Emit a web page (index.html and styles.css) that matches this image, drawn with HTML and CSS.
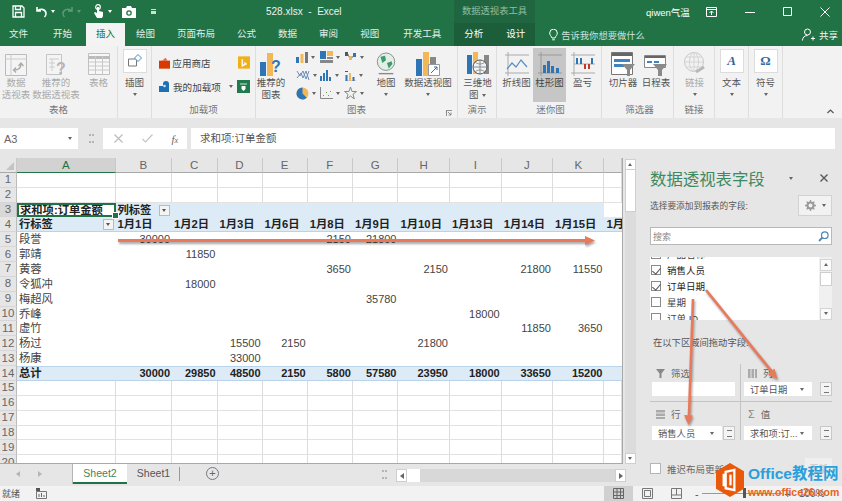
FILE: index.html
```html
<!DOCTYPE html>
<html lang="zh-CN">
<head>
  <meta charset="UTF-8">
  <title>528.xlsx - Excel</title>
  <link rel="stylesheet" href="styles.css">
</head>
<body>
  <div class="app">

    <!-- title bar -->
    <header class="titlebar">
      <div class="qat">
        <svg class="qat-save" width="13" height="13" viewBox="0 0 13 13"><path d="M1 1h9l2 2v9H1z M3.500 1v3.500h5V1 M3.500 12V7.500h6V12" fill="none" stroke="#fff" stroke-width="1.300"/></svg>
        <svg class="qat-undo" width="13" height="12" viewBox="0 0 13 12"><path d="M2 1v4h4 M2.500 5C4.500 2.500 10 2.500 11 7c.3 1.500-.5 3-1.500 4" fill="none" stroke="#fff" stroke-width="1.600"/></svg>
        <span class="qat-caret"></span>
        <svg class="qat-redo" width="13" height="12" viewBox="0 0 13 12"><path d="M11 1v4H7 M10.500 5C8.500 2.500 3 2.500 2 7c-.3 1.500.5 3 1.500 4" fill="none" stroke="#5d9c7c" stroke-width="1.500"/></svg>
        <span class="qat-caret qat-caret-off"></span>
        <svg class="qat-touch" width="12" height="15" viewBox="0 0 12 15"><circle cx="5" cy="3" r="2.300" fill="none" stroke="#fff" stroke-width="1.200"/><path d="M4 3h2v4l4 1v4l-1 2H4L1 9l1-1 2 1z" fill="#fff"/></svg>
        <span class="qat-caret"></span>
        <svg class="qat-camera" width="14" height="12" viewBox="0 0 14 12"><path d="M0 2h4l1-2h4l1 2h4v10H0z" fill="#fff"/><circle cx="7" cy="7" r="2.800" fill="#217346"/><circle cx="7" cy="7" r="1.500" fill="#fff"/></svg>
        <span class="qat-more"></span>
      </div>
      <div class="doc-title">528.xlsx&nbsp; - &nbsp;Excel</div>
      <div class="ctx-title">数据透视表工具</div>
      <div class="user">qiwen气温</div>
      <div class="win-btns">
        <svg width="11" height="10" viewBox="0 0 11 10"><path d="M.5.500h10v9H.5z M.5 2.500h10 M5.500 8V4 M3.500 6l2-2 2 2" fill="none" stroke="#fff"/></svg>
        <svg width="10" height="10" viewBox="0 0 10 10"><path d="M0 5.500h10" stroke="#fff"/></svg>
        <svg width="9" height="9" viewBox="0 0 9 9"><path d="M.5.500h8v8h-8z" fill="none" stroke="#fff"/></svg>
        <svg width="10" height="10" viewBox="0 0 10 10"><path d="M.5.500l9 9 M9.500.500l-9 9" stroke="#fff"/></svg>
      </div>
    </header>

    <!-- ribbon tabs -->
    <nav class="tabs">
      <a class="tab tab-file">文件</a>
      <a class="tab tab-home">开始</a>
      <a class="tab tab-insert">插入</a>
      <a class="tab">绘图</a>
      <a class="tab">页面布局</a>
      <a class="tab">公式</a>
      <a class="tab">数据</a>
      <a class="tab">审阅</a>
      <a class="tab">视图</a>
      <a class="tab tab-dev">开发工具</a>
      <a class="tab tab-ctx tab-analyze">分析</a>
      <a class="tab tab-ctx tab-design">设计</a>
      <div class="tell-me">
        <svg width="9" height="12" viewBox="0 0 9 12"><path d="M3 9C2.500 7 .7 6.500.7 4a3.800 3.800 0 0 1 7.600 0C8.300 6.500 6.500 7 6 9z M3.200 10.800h2.600" fill="none" stroke="#fff"/></svg>
        <span>告诉我你想要做什么</span>
      </div>
      <div class="share">
        <svg width="13" height="13" viewBox="0 0 13 13"><circle cx="5.500" cy="4" r="3" fill="none" stroke="#fff"/><path d="M.5 12.500c0-3 2-5 5-5 M9 10.500h4 M11 8.500v4" fill="none" stroke="#fff"/></svg>
        <span>共享</span>
      </div>
    </nav>

    <!-- ribbon -->
    <section class="ribbon">
      <div class="group g-table">
        <div class="group-items">
          <div class="big off w32">
            <svg width="24" height="24" viewBox="0 0 24 24"><path d="M1.500 2.500h21v21h-21z" fill="#f4f4f4" stroke="#bbb"/><path d="M1.500 7h21 M7 2.500v21" stroke="#ccc"/><path d="M10 18c4 0 7-2 7-6 M14.500 14l2.500-3 2.500 3 M12 15.500l-2.500 2.500 2.500 2.500" fill="none" stroke="#aaa" stroke-width="1.300"/></svg>
            <span>数据<br>透视表</span>
          </div>
          <div class="big off w48">
            <svg width="24" height="24" viewBox="0 0 24 24"><path d="M2.500 2.500h15v20h-15z" fill="#f4f4f4" stroke="#c4c4c4"/><path d="M5 7h10 M5 11h6 M5 15h6 M8 7v12" stroke="#ccc"/><text x="12" y="22" class="icon-q icon-q-off">?</text></svg>
            <span>推荐的<br>数据透视表</span>
          </div>
          <div class="big off w37">
            <svg width="24" height="24" viewBox="0 0 24 24"><path d="M1.500 1.500h21v21h-21z" fill="#f7f7f7" stroke="#c0c0c0"/><path d="M1.500 5.500h21" stroke="#bbb" stroke-width="3"/><path d="M1.500 10h21 M1.500 14h21 M1.500 18h21 M8.500 4v18 M15.500 4v18" stroke="#c8c8c8"/></svg>
            <span>表格</span>
          </div>
        </div>
        <div class="group-label">表格</div>
      </div>

      <div class="group g-illus">
        <div class="group-items">
          <div class="big boxed">
            <div class="ic-box"><svg width="16" height="16" viewBox="0 0 16 16"><path d="M1.500 6h8v7h-8z" fill="none" stroke="#777"/><path d="M11 1.500l3.500 3.500-3.500 3.500L7.500 5z" fill="#fff" stroke="#4a8ac4"/></svg></div>
            <span>插图</span>
            <i class="caret"></i>
          </div>
        </div>
        <div class="group-label"></div>
      </div>

      <div class="group g-addins">
        <div class="group-items addin-rows">
          <div class="addin-row">
            <svg width="12" height="12" viewBox="0 0 12 12"><path d="M0 3.500h12v8.500H0z" fill="#d83b01"/><path d="M3 3.500L7 .5l2 3" fill="#e8664a"/></svg>
            <span>应用商店</span>
            <svg class="addin-end" width="13" height="13" viewBox="0 0 13 13"><path d="M0 0h13v13H0z" fill="#efb116"/><path d="M4.500 3v7l4-2-2-1.500" fill="none" stroke="#fff" stroke-width="1.400"/></svg>
          </div>
          <div class="addin-row">
            <svg width="12" height="12" viewBox="0 0 12 12"><path d="M0 5h4V3a3 3 0 0 1 6 0v8H0z" fill="#1f6fb5"/><circle cx="5.500" cy="5" r="1.300" fill="#cfe3f5"/></svg>
            <span>我的加载项</span>
            <i class="caret caret-row"></i>
            <svg class="addin-end-b" width="13" height="13" viewBox="0 0 13 13"><path d="M0 0h13v13H0z" fill="#1f7a4d"/><path d="M3 4h7" stroke="#cfe8da"/><path d="M4.500 6h4v3l-2 2-2-2z" fill="#fff"/></svg>
          </div>
        </div>
        <div class="group-label">加载项</div>
      </div>

      <div class="group g-chart">
        <div class="group-items">
          <div class="big w30">
            <svg width="24" height="24" viewBox="0 0 24 24"><path d="M1 10h6v14H1z" fill="#2e75b6"/><path d="M8 1h6v23H8z" fill="#f2b858"/><text x="12" y="20" class="icon-q">?</text></svg>
            <span>推荐的<br>图表</span>
          </div>
          <div class="mini-charts">
            <div class="mini"><svg width="12" height="11" viewBox="0 0 12 11"><path d="M0 5h3v6H0z" fill="#2e75b6"/><path d="M4.500 2h3v9h-3z" fill="#f2b858"/><path d="M9 0h3v11H9z" fill="#777"/></svg><i class="caret"></i></div>
            <div class="mini"><svg width="14" height="12" viewBox="0 0 14 12"><path d="M1 2l3 5 3-5 3 8 3-8 M1 9l4-5 2 5 3-7 3 9" fill="none" stroke="#6a8fb8"/></svg><i class="caret"></i></div>
            <div class="mini"><svg width="13" height="13" viewBox="0 0 13 13"><circle cx="6.500" cy="6.500" r="6" fill="#f2b858"/><path d="M6.500 6.500V.5a6 6 0 1 0 4.200 10.300z" fill="#2e75b6"/></svg><i class="caret"></i></div>
            <div class="mini"><svg width="13" height="12" viewBox="0 0 13 12"><path d="M0 0h6v8H0z" fill="#2e75b6"/><path d="M7 0h6v5H7z" fill="#f2b858"/><path d="M0 9h13v3H0zM7 6h6v2H7z" fill="#888"/></svg><i class="caret"></i></div>
            <div class="mini"><svg width="12" height="11" viewBox="0 0 12 11"><path d="M0 6h2v5H0zM3 3h2v8H3zM6 0h2v11H6zM9 7h2v4H9z" fill="#2e75b6"/></svg><i class="caret"></i></div>
            <div class="mini"><svg width="13" height="12" viewBox="0 0 13 12"><path d="M.5 0v11.500H13" fill="none" stroke="#888"/><path d="M3 8h1v1H3zM6 5h1v1H6zM8 8h1v1H8zM10 4h1v1h-1z" fill="#6aa84f"/></svg><i class="caret"></i></div>
            <div class="mini"><svg width="13" height="12" viewBox="0 0 13 12"><path d="M1 1h3v4H1z" fill="#555"/><path d="M5 5h3v4H5z" fill="#f2b858"/><path d="M9 2h3v4H9z" fill="#2e75b6"/><path d="M4 3l1 3 M8 7l1-2" stroke="#888"/></svg><i class="caret"></i></div>
            <div class="mini"><svg width="12" height="11" viewBox="0 0 12 11"><path d="M1 11h11" stroke="#aaa"/><path d="M1.500 5h2v6h-2z" fill="#2e75b6"/><path d="M5 3h2v8H5z" fill="#f2b858"/><path d="M8.500 7h2v4h-2z" fill="#2e75b6"/><path d="M1 1.500h3" stroke="#555"/></svg><i class="caret"></i></div>
            <div class="mini"><svg width="13" height="12" viewBox="0 0 13 12"><path d="M6.500 0l1.500 4.500h4.500L9 7.300 10.300 12 6.500 9 2.700 12 4 7.300.5 4.500H5z" fill="none" stroke="#888"/></svg><i class="caret"></i></div>
          </div>
          <div class="big w36">
            <svg width="22" height="24" viewBox="0 0 24 26"><circle cx="12" cy="10.500" r="9.500" fill="#e2eee6" stroke="#7a8f84"/><path d="M6 5l5-1 1 5-4 3zM13 12l5-2 1 3-4 5z" fill="#3f9b6d"/><path d="M4 23.500h16" stroke="#888" stroke-width="1.500"/></svg>
            <span>地图</span>
            <i class="caret"></i>
          </div>
          <div class="big w48">
            <svg width="24" height="24" viewBox="0 0 24 24"><path d="M0 7h6v17H0z" fill="#2e75b6"/><path d="M7 0h6v24H7z" fill="#f2b858"/><path d="M14 5h6v9h-6z" fill="#888"/><path d="M12.500 12.500h11v11h-11z" fill="#fff" stroke="#999"/><path d="M15 21l6-6 M18 15h3v3" fill="none" stroke="#2e75b6"/></svg>
            <span>数据透视图</span>
            <i class="caret"></i>
          </div>
        </div>
        <div class="group-label">图表</div>
        <svg class="launcher" width="6" height="6" viewBox="0 0 6 6"><path d="M.5 3V.5H6 M.5.500v5.500 M2 2l3 3 M5 2.500V5H2.500" fill="none" stroke="#777" stroke-width=".8"/></svg>
      </div>

      <div class="group g-tour">
        <div class="group-items">
          <div class="big w39">
            <svg width="24" height="24" viewBox="0 0 24 24"><path d="M1 3h5v19H1z" fill="#2e75b6"/><path d="M7 0h5v22H7z" fill="#f2b858"/><path d="M18 3h5v19h-5z" fill="#888"/><circle cx="14" cy="15" r="7" fill="#eef3f7" stroke="#555"/><path d="M7 15h14 M14 8v14 M9.500 10.500c3 2 6 2 9 0 M9.500 19.500c3-2 6-2 9 0" fill="none" stroke="#777" stroke-width=".8"/></svg>
            <span>三维地<br>图 <i class="caret caret-inline"></i></span>
          </div>
        </div>
        <div class="group-label">演示</div>
      </div>

      <div class="group g-spark">
        <div class="group-items">
          <div class="big w33">
            <svg width="24" height="24" viewBox="0 0 24 24"><path d="M0 3h24 M0 21h24 M3 0v24" stroke="#aaa" fill="none"/><path d="M2 17l5-6 4 4 5-7 6 7" fill="none" stroke="#5b8fc0" stroke-width="1.200"/></svg>
            <span>折线图</span>
          </div>
          <div class="big w33 spark-on">
            <svg width="24" height="24" viewBox="0 0 24 24"><path d="M0 3h24 M0 21h24 M3 0v24" stroke="#999" fill="none"/><path d="M5 13h3v8H5zM9 9h3v12H9zM13 14h3v7h-3zM18 16h3v5h-3z" fill="#2e75b6"/></svg>
            <span>柱形图</span>
          </div>
          <div class="big w33">
            <svg width="24" height="24" viewBox="0 0 24 24"><path d="M0 3h24 M0 21h24 M3 0v24 M3 12h21" stroke="#aaa" fill="none"/><path d="M5 6h2v6H5zM9 6h2v6H9zM20 6h2v6h-2z" fill="#2e75b6"/><path d="M13 12h2v5h-2zM17 12h2v5h-2z" fill="#c0392b"/></svg>
            <span>盈亏</span>
          </div>
        </div>
        <div class="group-label">迷你图</div>
      </div>

      <div class="group g-filter">
        <div class="group-items">
          <div class="big w34">
            <svg width="24" height="24" viewBox="0 0 24 24"><path d="M.5.500h21v22H.500z" fill="#fff" stroke="#777"/><path d="M1 1h20v3H1z" fill="#666"/><path d="M3 7h16v3H3zM3 12h10v3H3z" fill="#3f83c0"/><path d="M11 12h13l-5 6v6h-3v-6z" fill="#8a8a8a"/></svg>
            <span>切片器</span>
          </div>
          <div class="big w32">
            <svg width="24" height="24" viewBox="0 0 24 24"><path d="M.5 3.500h21v12H.500z" fill="#fff" stroke="#888"/><path d="M1 4h20v2H1z" fill="#666"/><path d="M3 9h5v2H3zM10 9h5v2h-5z" fill="#3f83c0"/><path d="M9 12h14l-5 6v6h-4v-6z" fill="#8a8a8a"/></svg>
            <span>日程表</span>
          </div>
        </div>
        <div class="group-label">筛选器</div>
      </div>

      <div class="group g-link">
        <div class="group-items">
          <div class="big off w41">
            <svg width="24" height="24" viewBox="0 0 24 24"><circle cx="11" cy="10" r="9.500" fill="none" stroke="#c8c8c8"/><path d="M1.500 10h19 M11 .5v19 M3.500 5h15 M3.500 15h15" stroke="#d4d4d4"/><ellipse cx="11" cy="10" rx="4.500" ry="9.500" fill="none" stroke="#d4d4d4"/><path d="M13 20l8-5" stroke="#b8b8b8" stroke-width="3"/></svg>
            <span>链接</span>
            <i class="caret"></i>
          </div>
        </div>
        <div class="group-label">链接</div>
      </div>

      <div class="group g-text">
        <div class="group-items">
          <div class="big boxed">
            <div class="ic-box"><em class="letter-a">A</em></div>
            <span>文本</span>
            <i class="caret"></i>
          </div>
        </div>
        <div class="group-label"></div>
      </div>

      <div class="group g-symbol">
        <div class="group-items">
          <div class="big boxed">
            <div class="ic-box"><em class="letter-o">Ω</em></div>
            <span>符号</span>
            <i class="caret"></i>
          </div>
        </div>
        <div class="group-label"></div>
      </div>

      <svg class="collapse" width="7" height="5" viewBox="0 0 7 5"><path d="M.5 4l3-3 3 3" fill="none" stroke="#555" stroke-width="1.200"/></svg>
    </section>

    <!-- formula bar -->
    <div class="formula">
      <div class="name-box"><span>A3</span><i class="caret"></i></div>
      <div class="f-dots"></div>
      <div class="f-btns">
        <svg width="9" height="9" viewBox="0 0 9 9"><path d="M.5.500l8 8 M8.500.500l-8 8" stroke="#bcbcbc" stroke-width="1.200"/></svg>
        <svg width="11" height="9" viewBox="0 0 11 9"><path d="M.5 5l3 3 7-7.500" fill="none" stroke="#c4c4c4" stroke-width="1.200"/></svg>
        <em>f<small>x</small></em>
      </div>
      <div class="f-input">求和项:订单金额</div>
    </div>

    <div class="workspace">
      <main class="book">
        <div class="sheet-row">
          <div class="grid-wrap">
            <table class="sheet">
              <colgroup>
                <col class="c-head"><col class="c-a"><col class="c-b"><col class="c-c"><col class="c-d"><col class="c-e"><col class="c-f"><col class="c-g"><col class="c-h"><col class="c-i"><col class="c-j"><col class="c-k"><col class="c-l">
              </colgroup>
              <thead>
                <tr><th class="corner"></th><th class="col-on">A</th><th>B</th><th>C</th><th>D</th><th>E</th><th>F</th><th>G</th><th>H</th><th>I</th><th>J</th><th>K</th><th></th></tr>
              </thead>
              <tbody>
                <tr class="lined"><th>1</th><td></td><td></td><td></td><td></td><td></td><td></td><td></td><td></td><td></td><td></td><td></td><td></td></tr>
                <tr class="lined"><th>2</th><td></td><td></td><td></td><td></td><td></td><td></td><td></td><td></td><td></td><td></td><td></td><td></td></tr>
                <tr class="band"><th class="row-on">3</th><td class="selected">求和项:订单金额</td><td class="lbl" colspan="2">列标签<i class="filter-btn filter-col"></i></td><td></td><td></td><td></td><td></td><td></td><td></td><td></td><td></td></tr>
                <tr class="band under"><th>4</th><td class="lbl">行标签<i class="filter-btn"></i></td><td class="lbl">1月1日</td><td class="lbl">1月2日</td><td class="lbl">1月3日</td><td class="lbl">1月6日</td><td class="lbl">1月8日</td><td class="lbl">1月9日</td><td class="lbl">1月10日</td><td class="lbl">1月13日</td><td class="lbl">1月14日</td><td class="lbl">1月15日</td><td class="lbl">1月</td></tr>
                <tr><th>5</th><td class="lbl">段誉</td><td>30000</td><td></td><td></td><td></td><td>2150</td><td>21800</td><td></td><td></td><td></td><td></td><td></td></tr>
                <tr><th>6</th><td class="lbl">郭靖</td><td></td><td>11850</td><td></td><td></td><td></td><td></td><td></td><td></td><td></td><td></td><td></td></tr>
                <tr><th>7</th><td class="lbl">黄蓉</td><td></td><td></td><td></td><td></td><td>3650</td><td></td><td>2150</td><td></td><td>21800</td><td>11550</td><td></td></tr>
                <tr><th>8</th><td class="lbl">令狐冲</td><td></td><td>18000</td><td></td><td></td><td></td><td></td><td></td><td></td><td></td><td></td><td></td></tr>
                <tr><th>9</th><td class="lbl">梅超风</td><td></td><td></td><td></td><td></td><td></td><td>35780</td><td></td><td></td><td></td><td></td><td></td></tr>
                <tr><th>10</th><td class="lbl">乔峰</td><td></td><td></td><td></td><td></td><td></td><td></td><td></td><td>18000</td><td></td><td></td><td></td></tr>
                <tr><th>11</th><td class="lbl">虚竹</td><td></td><td></td><td></td><td></td><td></td><td></td><td></td><td></td><td>11850</td><td>3650</td><td></td></tr>
                <tr><th>12</th><td class="lbl">杨过</td><td></td><td></td><td>15500</td><td>2150</td><td></td><td></td><td>21800</td><td></td><td></td><td></td><td></td></tr>
                <tr><th>13</th><td class="lbl">杨康</td><td></td><td></td><td>33000</td><td></td><td></td><td></td><td></td><td></td><td></td><td></td><td></td></tr>
                <tr class="band total"><th>14</th><td class="lbl">总计</td><td>30000</td><td>29850</td><td>48500</td><td>2150</td><td>5800</td><td>57580</td><td>23950</td><td>18000</td><td>33650</td><td>15200</td><td></td></tr>
                <tr class="lined"><th>15</th><td></td><td></td><td></td><td></td><td></td><td></td><td></td><td></td><td></td><td></td><td></td><td></td></tr>
                <tr class="lined"><th>16</th><td></td><td></td><td></td><td></td><td></td><td></td><td></td><td></td><td></td><td></td><td></td><td></td></tr>
                <tr class="lined"><th>17</th><td></td><td></td><td></td><td></td><td></td><td></td><td></td><td></td><td></td><td></td><td></td><td></td></tr>
                <tr class="lined"><th>18</th><td></td><td></td><td></td><td></td><td></td><td></td><td></td><td></td><td></td><td></td><td></td><td></td></tr>
                <tr class="lined"><th>19</th><td></td><td></td><td></td><td></td><td></td><td></td><td></td><td></td><td></td><td></td><td></td><td></td></tr>
                <tr class="lined"><th>20</th><td></td><td></td><td></td><td></td><td></td><td></td><td></td><td></td><td></td><td></td><td></td><td></td></tr>
              </tbody>
            </table>
          </div>
          <div class="vscroll">
            <div class="sb-btn sb-up"></div>
            <div class="sb-thumb"></div>
            <div class="sb-track"></div>
            <div class="sb-btn sb-down"></div>
          </div>
        </div>

        <div class="sheet-tabs">
          <div class="tab-nav"><i class="nav-l"></i><i class="nav-r"></i></div>
          <div class="stab stab-on">Sheet2</div>
          <div class="stab">Sheet1</div>
          <div class="add-sheet">+</div>
          <div class="tab-split"></div>
          <div class="hscroll">
            <div class="hb-btn"><i class="nav-l"></i></div>
            <div class="hb-thumb"></div>
            <div class="hb-track"></div>
            <div class="hb-btn"><i class="nav-r"></i></div>
          </div>
        </div>
      </main>

      <!-- pivot field pane -->
      <aside class="pane">
        <div class="pane-head">
          <h2>数据透视表字段</h2>
          <i class="caret pane-caret"></i>
          <svg class="pane-x" width="8" height="8" viewBox="0 0 8 8"><path d="M.5.500l7 7 M7.500.500l-7 7" stroke="#555" stroke-width="1.300"/></svg>
        </div>
        <div class="pane-sub">
          <span>选择要添加到报表的字段:</span>
          <div class="gear-btn">
            <svg width="11" height="11" viewBox="0 0 11 11"><circle cx="5.500" cy="5.500" r="3" fill="none" stroke="#999" stroke-width="2"/><path d="M5.500 0v2 M5.500 9v2 M0 5.500h2 M9 5.500h2 M1.600 1.600L3 3 M8 8l1.400 1.400 M9.400 1.600L8 3 M3 8L1.600 9.400" stroke="#999" stroke-width="1.300"/></svg>
            <i class="caret"></i>
          </div>
        </div>
        <div class="search">
          <span>搜索</span>
          <svg width="11" height="11" viewBox="0 0 11 11"><circle cx="6.800" cy="4.200" r="3.300" fill="none" stroke="#4d86b8" stroke-width="1.200"/><path d="M4.300 6.700L1 10" stroke="#4d86b8" stroke-width="1.800"/></svg>
        </div>
        <div class="field-list">
          <div class="fields">
            <div class="field field-top"><i class="chk"></i><span>产品名称</span></div>
            <div class="field"><i class="chk on"></i><b>销售人员</b></div>
            <div class="field"><i class="chk on"></i><b>订单日期</b></div>
            <div class="field"><i class="chk"></i><span>星期</span></div>
            <div class="field"><i class="chk"></i><span>订单 ID</span></div>
          </div>
          <div class="field-scroll">
            <div class="fs-btn fs-up"></div>
            <div class="fs-thumb"></div>
            <div class="fs-track"></div>
            <div class="fs-btn fs-down"></div>
          </div>
        </div>
        <p class="pane-hint">在以下区域间拖动字段:</p>
        <div class="areas">
          <div class="area area-tl">
            <div class="area-title">
              <svg width="9" height="9" viewBox="0 0 9 9"><path d="M0 0h9L5.500 4.500V9h-2V4.500z" fill="#888"/></svg><span>筛选</span>
            </div>
            <div class="area-empty"></div>
          </div>
          <div class="area area-tr">
            <div class="area-title">
              <svg width="9" height="9" viewBox="0 0 9 9"><path d="M0 0h2.500v9H0zM3.500 0H6v9H3.500zM7 0h2v9H7z" fill="#aaa"/></svg><span>列</span>
            </div>
            <div class="area-pick"><div class="pick"><span>订单日期</span><i class="caret"></i></div><div class="spin"><i></i><i></i></div></div>
          </div>
          <div class="area area-bl">
            <div class="area-title">
              <svg width="9" height="9" viewBox="0 0 9 9"><path d="M0 0h9v2.500H0zM0 3.500h9V6H0zM0 7h9v2H0z" fill="#aaa"/></svg><span>行</span>
            </div>
            <div class="area-pick"><div class="pick pick-sm"><span>销售人员</span><i class="caret"></i></div><div class="spin"><i></i><i></i></div></div>
          </div>
          <div class="area area-br">
            <div class="area-title">
              <em class="sigma">Σ</em><span>值</span>
            </div>
            <div class="area-pick"><div class="pick"><span>求和项:订...</span><i class="caret"></i></div><div class="spin"><i></i><i></i></div></div>
          </div>
        </div>
        <div class="pane-foot">
          <i class="chk"></i>
          <span>推迟布局更新</span>
          <button class="update">更新</button>
        </div>
      </aside>
    </div>

    <!-- status bar -->
    <footer class="status">
      <span class="ready">就绪</span>
      <svg class="macro" width="11" height="11" viewBox="0 0 11 11"><path d="M.5 3.500h10v7H.5z" fill="none" stroke="#777"/><path d="M0 0h4v3H0z" fill="#555"/><path d="M3 9V6 M5.500 9V5 M8 9V7" stroke="#666"/></svg>
      <div class="view view-on">
        <svg width="11" height="11" viewBox="0 0 11 11"><path d="M.5.500h10v10H.500z M.5 4h10 M.5 7.500h10 M4 .500v10 M7.500.500v10" fill="none" stroke="#666"/></svg>
      </div>
      <div class="view">
        <svg width="11" height="11" viewBox="0 0 11 11"><path d="M.5.500h10v10H.500z M2.500 2.500h6v6h-6z" fill="none" stroke="#777"/></svg>
      </div>
      <div class="view">
        <svg width="11" height="11" viewBox="0 0 11 11"><path d="M.5.500h10v10H.500z M.5 7h10 M5.500.500V7" fill="none" stroke="#777"/></svg>
      </div>
      <div class="zoom-bar"><span>-</span><div class="slider"><i></i></div><span>+</span></div>
      <span class="zoom-val">100%</span>
    </footer>

    <!-- arrows drawn over the screenshot -->
    <svg class="arrows" width="842" height="501" viewBox="0 0 842 501">
      <path d="M118 240.500H586" stroke="#e9795a" stroke-width="2.800" fill="none"/>
      <path d="M595 240.500l-10-4.500v9z" fill="#e9795a"/>
      <path d="M706 290L773 373" stroke="#e9795a" stroke-width="2.600" fill="none"/>
      <path d="M777.500 379l-9.500-4.500 6.500-6z" fill="#e9795a"/>
      <path d="M693 299L689 416" stroke="#e9795a" stroke-width="2.600" fill="none"/>
      <path d="M688.500 425l-4.500-10 9 .5z" fill="#e9795a"/>
    </svg>

    <!-- site watermark -->
    <div class="mark">
      <svg width="28" height="34" viewBox="0 0 29 35"><path d="M14.500 0L29 8.500v18L14.500 35 0 26.500v-18z" fill="#e8590c"/><path d="M10 9l9-2v21l-9-2z M8 11v13" fill="none" stroke="#fff" stroke-width="2.400"/><path d="M15 12v11" stroke="#fff" stroke-width="2.400"/></svg>
      <div class="mark-text">
        <strong>Office教程网</strong>
        <span>www.office26.com</span>
      </div>
    </div>
  </div>
</body>
</html>
```

FILE: styles.css
```css
*{margin: 0; padding: 0; box-sizing: border-box;}
html, body{width: 842px; height: 501px; overflow: hidden;}
body{font-family: "Liberation Sans", "Noto Sans CJK SC", sans-serif; background-color: #e6e6e6; color: #444;}
i, em{font-style: normal;}

.app{width: 842px; height: 501px; position: relative; overflow: hidden; display: flex; flex-direction: column;}

/* small dropdown triangle used all over */
.caret{display: block; width: 0; height: 0; border-left: 2.500px solid transparent; border-right: 2.500px solid transparent; border-top: 3px solid #666;}

/* title bar */
.titlebar{height: 23px; background-color: #217346; color: #fff; display: flex; align-items: center; font-size: 9.500px;}
.qat{width: 266px; display: flex; align-items: center; padding-left: 12px;}
.qat-undo{margin-left: 10px;}
.qat-caret{width: 0; height: 0; margin-left: 3px; border-left: 2px solid transparent; border-right: 2px solid transparent; border-top: 3px solid #fff;}
.qat-caret-off{border-top-color: #5d9c7c;}
.qat-redo{margin-left: 6px;}
.qat-touch{margin-left: 12px;}
.qat-camera{margin-left: 10px;}
.qat-more{width: 5px; height: 5px; margin-left: 15px; border-top: 1px solid #cfe0d6; border-bottom: 3px solid #cfe0d6;}
.doc-title{width: 188px; font-size: 10px; color: #e9f2ed;}
.ctx-title{width: 81px; height: 23px; line-height: 23px; text-align: center; background-color: #1f6640; color: #8fbfa4; font-size: 9.300px;}
.user{width: 156px; padding-left: 111px; white-space: nowrap; font-size: 9.500px;}
.win-btns{display: flex; align-items: center; margin-left: 15px; gap: 28px;}

/* tabs */
.tabs{height: 23px; background-color: #217346; color: #fff; display: flex; align-items: stretch; font-size: 9.500px;}
.tab{padding: 0 11px; line-height: 22px; color: #e4efe9;}
.tab-file{padding: 0 11px 0 9px;}
.tab-home{padding: 0 14px;}
.tab-insert{padding: 0 10px; background-color: #f3f3f3; color: #217346;}
.tab-dev{padding: 0 13px;}
.tab-ctx{background-color: #1c5e3a; color: #fff;}
.tab-analyze{padding: 0 10px;}
.tab-design{padding: 0 10px 0 13px;}
.tell-me{display: flex; align-items: center; gap: 3px; padding-left: 14px; flex: 1; color: #cfe2d8; font-size: 9.300px;}
.share{display: flex; align-items: center; gap: 4px; padding-right: 4px; color: #f2f7f4;}

/* ribbon */
.ribbon{height: 72px; background-color: #f2f2f2; display: flex; position: relative; font-size: 9.500px; color: #555;}
.group{position: relative; display: flex; flex-direction: column; flex-shrink: 0; border-right: 1px solid #dedede;}
.group-items{flex: 1; display: flex;}
.group-label{height: 15px; line-height: 13px; text-align: center; color: #777;}
.g-table{width: 118px;}
.g-illus{width: 34px;}
.g-addins{width: 104px;}
.g-chart{width: 202px;}
.g-tour{width: 39px;}
.g-spark{width: 105px; padding-left: 3px;}
.g-filter{width: 72px; padding-left: 4px;}
.g-link{width: 41px;}
.g-text{width: 34px;}
.g-symbol{width: 34px;}

.big{display: flex; flex-direction: column; align-items: center; text-align: center; padding-top: 6px; line-height: 12px; flex-shrink: 0;}
.big svg{flex-shrink: 0;}
.big > span{margin-top: 1px; white-space: nowrap;}
.big > .caret{margin-top: 4px;}
.off{color: #aaa;}
.w30{width: 30px;}
.w32{width: 32px;}
.w33{width: 33px;}
.w34{width: 34px;}
.w36{width: 36px;}
.w37{width: 37px;}
.w39{width: 39px;}
.w41{width: 41px;}
.w48{width: 48px;}
.spark-on{background-color: #c6c6c6; height: 54px; margin-top: 2px; padding-top: 4px; color: #444;}
.icon-q{font: bold 16px "Liberation Sans", sans-serif; fill: #2e75b6;}
.icon-q-off{fill: #b5b5b5;}

.boxed{width: 100%; padding-top: 3px;}
.ic-box{width: 24px; height: 24px; background-color: #fff; border: 1px solid #dcdcdc; display: flex; align-items: center; justify-content: center;}
.boxed > span{margin-top: 4px;}
.letter-a{font: italic bold 13px "Liberation Serif", serif; color: #2e5f9e;}
.letter-o{font: bold 13px "Liberation Serif", serif; color: #2e6da4;}

.addin-rows{flex-direction: column; padding: 10px 5px 0 7px; gap: 11px;}
.addin-row{display: flex; align-items: center; height: 13px; color: #444; font-size: 9.600px;}
.addin-row > span{margin-left: 2px; white-space: nowrap;}
.addin-end{margin-left: 27px;}
.caret-row{margin-left: 8px;}
.addin-end-b{margin-left: 4px;}

.mini-charts{width: 72px; margin-left: 10px; padding-top: 2px; display: grid; grid-template-columns: repeat(3, 1fr); grid-auto-flow: column; grid-template-rows: repeat(3, 18px);}
.mini{display: flex; align-items: center; gap: 3px;}

.launcher{position: absolute; right: 5px; bottom: 2px;}
.caret-inline{display: inline-block; vertical-align: middle; margin-left: 1px;}
.collapse{position: absolute; right: 8px; bottom: 4px;}

/* formula bar */
.formula{height: 32px; padding: 10px 7px 0 0; display: flex; align-items: flex-start;}
.name-box{width: 78px; height: 21px; background-color: #fff; display: flex; align-items: center; justify-content: space-between; padding: 0 6px 0 4px; font-size: 11px; color: #666;}
.f-dots{width: 3px; height: 9px; margin: 6px 11px 0; border-top: 2px dotted #b5b5b5; border-bottom: 2px dotted #b5b5b5;}
.f-btns{width: 84px; height: 21px; background-color: #fff; display: flex; align-items: center; justify-content: space-between; padding: 0 9px 0 11px;}
.f-btns em{font: italic 11px "Liberation Serif", serif; color: #666;}
.f-btns small{font-size: 8px;}
.f-input{flex: 1; height: 21px; margin-left: 4px; background-color: #fff; padding-left: 9px; line-height: 20px; font-size: 10.500px; color: #555;}

/* main part */
.workspace{flex: 1; display: flex; min-height: 0;}
.book{width: 640px; padding-top: 8px; display: flex; flex-direction: column;}
.sheet-row{height: 306px; display: flex;}
.grid-wrap{width: 623px; height: 306px; overflow: hidden; border-right: 1px solid #a8a8a8; border-bottom: 1px solid #a8a8a8;}

.sheet{width: 622px; table-layout: fixed; border-collapse: separate; border-spacing: 0; background-color: #fff;}
.c-head{width: 17px;}
.c-a{width: 98.500px;}
.c-b{width: 56.500px;}
.c-c{width: 45.500px;}
.c-d{width: 45px;}
.c-e{width: 45.200px;}
.c-f{width: 45.300px;}
.c-g{width: 45.500px;}
.c-h{width: 51.500px;}
.c-i{width: 51.700px;}
.c-j{width: 51.300px;}
.c-k{width: 51.500px;}
.c-l{width: 17.500px;}

.sheet thead th{height: 14px; background-color: #e6e6e6; border-bottom: 1px solid #a8a8a8; border-right: 1px solid #c8c8c8; font-weight: normal; font-size: 11.500px; line-height: 12px; color: #666;}
.sheet thead th.col-on{background-color: #d2d2d2; border-bottom: 1px solid #217346; color: #217346;}
.sheet thead th.corner{position: relative;}
.sheet thead th.corner::after{content: ""; position: absolute; right: 2px; bottom: 2px; border-left: 8px solid transparent; border-bottom: 8px solid #c4c4c4;}
.sheet tr{height: 14.860px;}
.sheet tbody th{background-color: #e6e6e6; border-right: 1px solid #bbb; border-bottom: 1px solid #d6d6d6; font-weight: normal; font-size: 11.500px; line-height: 13px; color: #666; padding: 0; overflow: hidden; white-space: nowrap;}
.sheet tbody th.row-on{background-color: #d8d8d8;}
.sheet td{padding: 0 2px 0 1px; text-align: right; font-size: 11px; line-height: 13px; color: #444; white-space: nowrap; overflow: hidden;}
.sheet td.lbl{text-align: left; padding-left: 2px; font-size: 11.300px;}
.lined td{border-bottom: 1px solid #e2e2e2; border-right: 1px solid #dcdcdc;}
.band td{background-color: #ddebf7;}
.band td, .band td.lbl{font-weight: bold; color: #222;}
.under td{border-bottom: 1px solid #b8d3ea;}
.total td{border-top: 1px solid #b8d3ea; border-bottom: 1px solid #b8d3ea;}
.sheet td.selected{position: relative; text-align: left; padding-left: 3px; font-size: 11.300px; background-color: #fff; outline: 2px solid #217346; outline-offset: -2px; overflow: visible;}
.sheet td.selected::after{content: ""; position: absolute; right: -3px; bottom: -2px; width: 5px; height: 5px; background-color: #217346; border: 1px solid #fff;}

.filter-btn{float: right; width: 11px; height: 11px; margin-top: 1px; background-color: #f4f4f4; border: 1px solid #bbb; position: relative;}
.filter-btn::after{content: ""; position: absolute; left: 2px; top: 3px; border-left: 2.500px solid transparent; border-right: 2.500px solid transparent; border-top: 3px solid #555;}
.filter-col{float: none; display: inline-block; vertical-align: top; margin-left: 8px;}

.vscroll{width: 17px; height: 306px; padding: 1px 4px 0 2px; display: flex; flex-direction: column;}
.sb-btn{height: 11px; background-color: #fff; border: 1px solid #cfcfcf; position: relative;}
.sb-btn::after{content: ""; position: absolute; left: 2px; top: 3px; border-left: 2.500px solid transparent; border-right: 2.500px solid transparent;}
.sb-up::after{border-bottom: 3px solid #666;}
.sb-down::after{border-top: 3px solid #666;}
.sb-thumb{height: 42px; background-color: #fff; border: 1px solid #cfcfcf; border-top: 0;}
.sb-track{flex: 1; background-color: #dcdcdc;}

.sheet-tabs{height: 20px; display: flex; align-items: stretch; font-size: 10.500px;}
.tab-nav{width: 73px; display: flex; align-items: center; gap: 18px; padding-left: 16px; border-right: 1px solid #b5b5b5;}
.nav-l{display: block; width: 0; height: 0; border-top: 3px solid transparent; border-bottom: 3px solid transparent; border-right: 4px solid #b5b5b5;}
.nav-r{display: block; width: 0; height: 0; border-top: 3px solid transparent; border-bottom: 3px solid transparent; border-left: 4px solid #b5b5b5;}
.stab{width: 53px; text-align: center; line-height: 19px; color: #555; position: relative;}
.stab-on{width: 54px; background-color: #fff; color: #3f8660; border-bottom: 2px solid #217346;}
.stab:nth-child(3)::after{content: ""; position: absolute; right: 0; top: 3px; height: 14px; border-right: 1px solid #999;}
.add-sheet{width: 13px; height: 13px; margin: 3px 0 0 26px; border: 1px solid #777; border-radius: 50%; font-size: 11px; line-height: 10px; text-align: center; color: #666;}
.tab-split{width: 3px; height: 9px; margin: 6px 0 0 163px; border-top: 2px dotted #b5b5b5; border-bottom: 2px dotted #b5b5b5;}
.hscroll{width: 230px; height: 13px; margin: 5px 0 0 11px; background-color: #d8d8d8; display: flex;}
.hb-btn{width: 11px; background-color: #fff; border: 1px solid #cfcfcf; display: flex; align-items: center; justify-content: center;}
.hb-btn i{border-left-color: #666; border-right-color: #666;}
.hb-thumb{width: 13px; background-color: #fff;}
.hb-track{flex: 1;}

/* pane */
.pane{width: 202px; padding: 18px 10px 0; display: flex; flex-direction: column; font-size: 9px; color: #555;}
.pane-head{height: 20px; display: flex; align-items: center;}
.pane-head h2{font-size: 16.400px; font-weight: normal; color: #3c8a64; white-space: nowrap;}
.pane-caret{margin-left: 24px;}
.pane-x{margin-left: 27px;}
.pane-sub{height: 21px; margin-top: 7px; display: flex; align-items: center; justify-content: space-between; font-size: 8.700px;}
.gear-btn{width: 34px; height: 21px; background-color: #f2f2f2; border: 1px solid #d2d2d2; display: flex; align-items: center; justify-content: center; gap: 6px;}
.search{height: 18px; margin-top: 11px; background-color: #fff; border: 1px solid #b8b8b8; display: flex; align-items: center; justify-content: space-between; padding: 0 2px; color: #888;}
.field-list{height: 63px; margin-top: 12px; background-color: #fff; display: flex; overflow: hidden;}
.fields{flex: 1; overflow: hidden;}
.field{height: 16px; display: flex; align-items: center; gap: 6px; padding-left: 1px; font-size: 9.500px; color: #444;}
.field b{font-weight: normal; color: #222;}
.field-top{margin-top: -11px;}
.chk{display: block; width: 10px; height: 10px; border: 1px solid #8a8a8a; background-color: #fff; flex-shrink: 0; position: relative;}
.chk.on::after{content: ""; position: absolute; left: 2px; top: 0; width: 4px; height: 7px; border-right: 1px solid #555; border-bottom: 1px solid #555; transform: rotate(40deg);}
.field-scroll{width: 13px; padding-left: 1px; background-color: #f0f0f0; display: flex; flex-direction: column;}
.fs-btn{height: 12px; background-color: #fbfbfb; border: 1px solid #d4d4d4; position: relative; margin-top: 2px;}
.fs-btn::after{content: ""; position: absolute; left: 3px; top: 3px; border-left: 2.500px solid transparent; border-right: 2.500px solid transparent;}
.fs-up::after{border-bottom: 3px solid #666;}
.fs-down::after{border-top: 3px solid #666;}
.fs-thumb{height: 14px; margin-top: 1px; background-color: #fff; border: 1px solid #cfcfcf;}
.fs-track{flex: 1;}
.pane-hint{height: 12px; margin-top: 17px; padding-left: 3px; line-height: 12px; font-size: 9.300px; color: #555;}
.areas{margin-top: 15px; width: 182px; height: 76px; display: grid; grid-template-columns: 91px 91px; grid-template-rows: 38px 38px;}
.area{padding-left: 2px; padding-right: 0;}
.area-tl, .area-bl{border-right: 1px solid #c4c4c4; padding-right: 5px;}
.area-tr, .area-br{padding-left: 3px;}
.area-tl, .area-tr{border-bottom: 1px solid #c4c4c4;}
.area-title{height: 18px; display: flex; align-items: center; gap: 6px; padding-left: 4px; font-size: 9.500px; color: #666;}
.area-bl .area-title, .area-br .area-title{height: 24px;}
.area-empty{height: 14px; background-color: #fff;}
.area-pick{display: flex; align-items: flex-start; justify-content: space-between;}
.pick{width: 68px; height: 14px; background-color: #fff; display: flex; align-items: center; justify-content: space-between; padding: 0 8px 0 6px; color: #555; font-size: 9.300px; white-space: nowrap;}
.pick-sm{width: 70px;}
.spin{width: 12px; height: 14px; border: 1px solid #c8c8c8; background-color: #f4f4f4; display: flex; flex-direction: column; align-items: center; justify-content: space-around;}
.spin i{width: 5px; border-top: 1px solid #777;}
.sigma{font: 11px "Liberation Sans", sans-serif; color: #888;}
.pane-foot{margin-top: 17px; height: 23px; display: flex; align-items: center; font-size: 9.500px; color: #666;}
.pane-foot span{margin-left: 6px;}
.pane-foot .chk{width: 11px; height: 11px; border-color: #b5b5b5;}
.update{width: 27px; height: 22px; margin-left: auto; border: 0; background-color: #efefef; color: #bbb; font: 9px "Liberation Sans", "Noto Sans CJK SC", sans-serif;}

/* status bar */
.status{height: 15px; background-color: #f2f2f2; display: flex; align-items: center; font-size: 9px; color: #555; flex-shrink: 0;}
.ready{margin-left: 2px; width: 34px;}
.view{height: 15px; width: 29px; display: flex; align-items: center; justify-content: center;}
.view-on{margin-left: 557px; background-color: #d0d0d0;}
.zoom-bar{display: flex; align-items: center; margin-left: 4px; font-size: 11px; width: 96px; gap: 3px;}
.slider{flex: 1; height: 1px; background-color: #999; position: relative;}
.slider i{position: absolute; left: 41px; top: -5px; width: 3px; height: 10px; background-color: #555;}
.zoom-val{margin-left: 8px; font-size: 10px;}

/* overlays */
.arrows{position: absolute; left: 0; top: 0; pointer-events: none; filter: drop-shadow(1px 2px 1px rgba(0,0,0,.35));}
.mark{position: absolute; left: 716px; top: 463px; display: flex; gap: 4px;}
.mark-text{display: flex; flex-direction: column; line-height: 1;}
.mark-text strong{font-size: 15.500px; color: #2b9fdc; white-space: nowrap; margin-top: 3px;}
.mark-text span{font-size: 10.500px; font-weight: bold; color: #e8631a; margin-top: 5px; white-space: nowrap;}
```
